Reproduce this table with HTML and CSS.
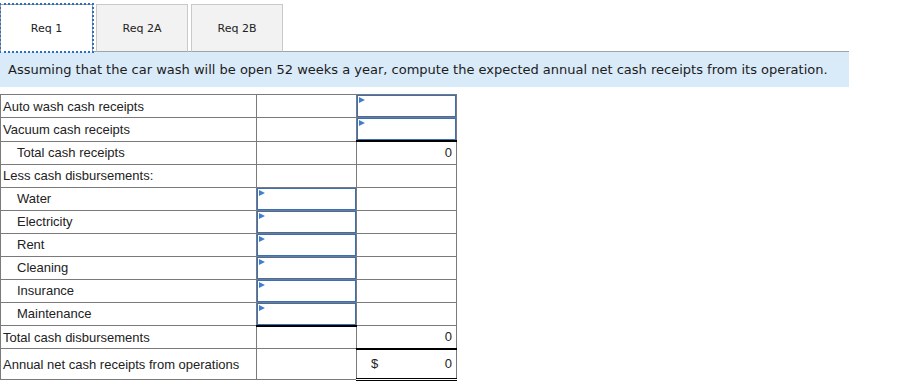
FILE: index.html
```html
<!DOCTYPE html>
<html lang="en">
<head>
    <meta charset="UTF-8">
    <title>Req 1 - Annual net cash receipts</title>
    <link rel="stylesheet" href="styles.css">
</head>
<body>
    <div class="tabs">
        <button class="tab active">Req 1</button>
        <button class="tab">Req 2A</button>
        <button class="tab">Req 2B</button>
    </div>

    <div class="prompt">
        Assuming that the car wash will be open 52 weeks a year, compute the expected annual net cash receipts from its operation.
    </div>

    <table class="worksheet">
        <colgroup>
            <col class="col-label">
            <col class="col-mid">
            <col class="col-total">
        </colgroup>
        <tr>
            <td>Auto wash cash receipts</td>
            <td></td>
            <td class="input-cell"><div class="entry"></div></td>
        </tr>
        <tr>
            <td>Vacuum cash receipts</td>
            <td></td>
            <td class="input-cell"><div class="entry"></div></td>
        </tr>
        <tr>
            <td class="indent">Total cash receipts</td>
            <td></td>
            <td class="num sum">0</td>
        </tr>
        <tr>
            <td>Less cash disbursements:</td>
            <td></td>
            <td></td>
        </tr>
        <tr>
            <td class="indent">Water</td>
            <td class="input-cell"><div class="entry"></div></td>
            <td></td>
        </tr>
        <tr>
            <td class="indent">Electricity</td>
            <td class="input-cell"><div class="entry"></div></td>
            <td></td>
        </tr>
        <tr>
            <td class="indent">Rent</td>
            <td class="input-cell"><div class="entry"></div></td>
            <td></td>
        </tr>
        <tr>
            <td class="indent">Cleaning</td>
            <td class="input-cell"><div class="entry"></div></td>
            <td></td>
        </tr>
        <tr>
            <td class="indent">Insurance</td>
            <td class="input-cell"><div class="entry"></div></td>
            <td></td>
        </tr>
        <tr>
            <td class="indent">Maintenance</td>
            <td class="input-cell"><div class="entry"></div></td>
            <td></td>
        </tr>
        <tr>
            <td>Total cash disbursements</td>
            <td class="sum"></td>
            <td class="num">0</td>
        </tr>
        <tr class="grand">
            <td>Annual net cash receipts from operations</td>
            <td></td>
            <td class="num sum final"><span class="dollar">$</span>0</td>
        </tr>
    </table>
</body>
</html>
```

FILE: styles.css
```css
* {
    margin: 0;
    padding: 0;
    box-sizing: border-box;
}

body {
    font-family: "DejaVu Sans", Verdana, sans-serif;
    background: #fff;
    color: #222;
}

/* tab strip */
.tabs {
    display: flex;
    gap: 3px;
    width: 849px;
    padding-top: 4px;
    border-bottom: 1px solid #a3a3a3;
}

.tab {
    height: 48px;
    width: 92px;
    margin-bottom: -1px;
    background: #f2f2f2;
    border: 1px solid #c9c9c9;
    border-bottom-color: #a3a3a3;
    font-family: "DejaVu Sans", Verdana, sans-serif;
    font-size: 11px;
    color: #222;
    cursor: pointer;
}

.tab.active {
    width: 93px;
    background: #fff;
    border-color: #a0a0a0;
    border-bottom-color: #fff;
    outline: 2px dotted #2c6ec2;
    outline-offset: -1px;
}

.prompt {
    width: 849px;
    height: 35px;
    padding-left: 8px;
    display: flex;
    align-items: center;
    background: #d9eaf8;
    font-size: 13px;
    color: #1c1c1c;
}

/* worksheet table */
.worksheet {
    margin-top: 7px;
    border-collapse: collapse;
    font-family: "Liberation Sans", Arial, sans-serif;
    font-size: 13px;
    color: #222;
}

.col-label { width: 256px; }
.col-mid { width: 100px; }
.col-total { width: 100px; }

.worksheet td {
    height: 23px;
    padding: 0 2px;
    border: 1px solid #7a7a7a;
    white-space: nowrap;
}

.worksheet td.indent {
    padding-left: 16px;
}

.worksheet td.num {
    text-align: right;
    padding-right: 4px;
}

.worksheet td.sum {
    border-top: 2px solid #000;
}

.worksheet td.final {
    border-bottom: 3px double #000;
}

.worksheet tr.grand td {
    height: 31px;
}

.dollar {
    float: left;
    padding-left: 12px;
}

.worksheet td.input-cell {
    padding: 0;
}

.entry {
    position: relative;
    height: 22px;
    border: 1px solid #3d6fb6;
    background: #fff;
}

/* little marker in the corner of each entry box */
.entry::before {
    content: "";
    position: absolute;
    top: 1px;
    left: 1px;
    border-top: 3px solid transparent;
    border-bottom: 3px solid transparent;
    border-left: 6px solid #3f7fd0;
}
```
